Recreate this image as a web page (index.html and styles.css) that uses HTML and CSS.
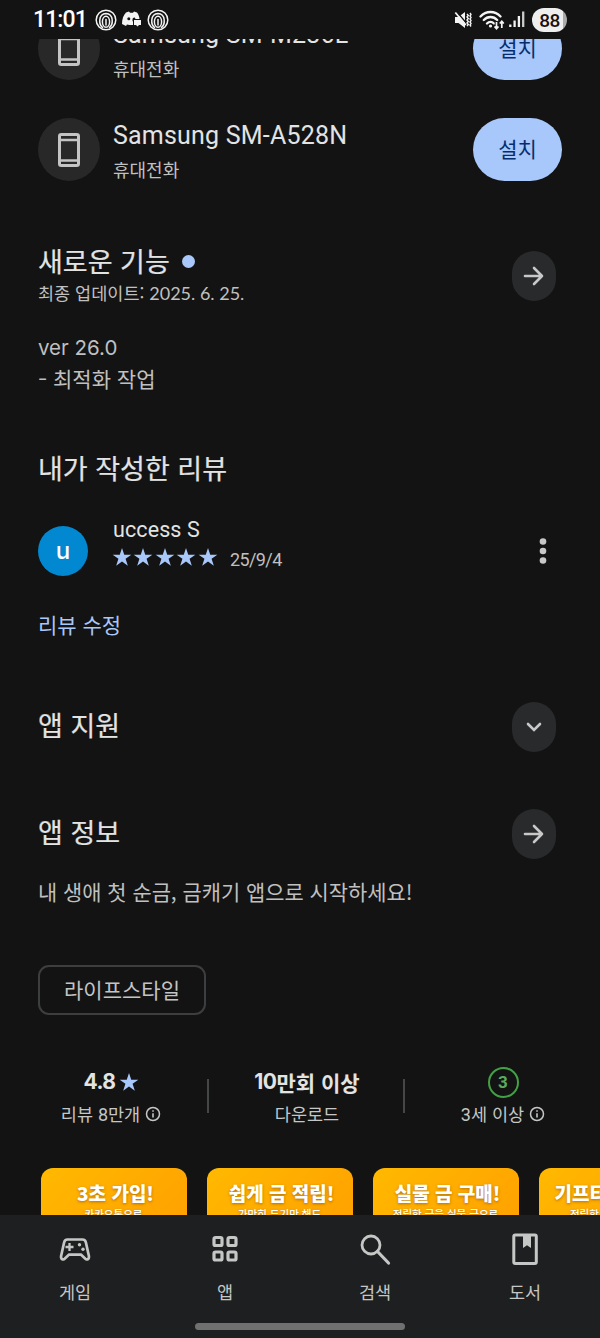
FILE: index.html
```html
<!DOCTYPE html>
<html lang="ko">
<head>
<meta charset="utf-8">
<title>앱 정보</title>
<link rel="stylesheet" href="styles.css">
</head>
<body>
<svg class="defs" width="0" height="0">
  <symbol id="phone" viewBox="0 0 22 34"><rect x="1.5" y="1.5" width="19" height="31" rx="1.8" fill="none" stroke="#c4c4c4" stroke-width="3"/><path d="M1 7h20M1 27.5h20" stroke="#c4c4c4" stroke-width="2.4"/></symbol>
  <symbol id="arrow" viewBox="0 0 22 22"><path d="M2 11h17M11 3l8 8-8 8" fill="none" stroke="#c8c8c8" stroke-width="2.6" stroke-linecap="round" stroke-linejoin="round"/></symbol>
  <symbol id="star" viewBox="0 0 24 24"><path d="M12 1.2l2.7 8h8.5l-6.9 5 2.7 8.2-7-5-7 5 2.7-8.2-6.9-5h8.5z" fill="#a8c7fa"/></symbol>
  <symbol id="info" viewBox="0 0 16 16"><circle cx="8" cy="8" r="6.5" fill="none" stroke="#c4c7c5" stroke-width="1.5"/><path d="M8 7.2v4.2M8 4.3v1.5" stroke="#c4c7c5" stroke-width="1.6"/></symbol>
  <symbol id="touch" viewBox="0 0 22 22"><g fill="none" stroke="#f4f4f4" stroke-width="1.5"><circle cx="11" cy="11" r="9.8"/><path d="M8 18.800C3.500 16 3 5 11 4.500c8 .5 7.500 11.500 3 14.300"/><ellipse cx="11" cy="12.800" rx="3.600" ry="5.500"/><path d="M11 10.500v5.500" stroke-linecap="round"/></g></symbol>
</svg>
<div class="screen">
  <header class="status">
    <span class="clock">11:01</span>
    <svg class="s-touch" width="22" height="22"><use href="#touch"/></svg>
    <svg class="s-chat" width="20" height="17" viewBox="0 0 20 17"><path d="M4 1.500L7 .5l1 1.300h3l1-1.300 3 1c1.600 2 2.300 4.300 2.500 6.500H11v6H7.500L5 13.500 4 15 0 13C0 8 1.500 4 4 1.500z" fill="#f4f4f4"/><circle cx="6.800" cy="7.800" r="1.500" fill="#131313"/><path d="M10.500 10.500V8.500a1.600 1.600 0 0 1 3-1" fill="#131313"/><path d="M12 9h7v5h-2l-1.500 1.500L14 14h-2z" fill="#f4f4f4"/></svg>
    <svg class="s-touch2" width="22" height="22"><use href="#touch"/></svg>
    <svg class="s-mute" width="18" height="18" viewBox="0 0 18 18"><path d="M1 6h3.500L11 1v16l-6.500-5H1z" fill="#f4f4f4"/><path d="M2.500 .5l11 13" stroke="#131313" stroke-width="1.500"/><path d="M1.300 1.500l10.500 12.500" stroke="#f4f4f4" stroke-width="1.800"/><path d="M13 3l1.300 1.500L13 6l1.300 1.500L13 9l1.300 1.500L13 12l1.300 1.500L13 15M16 2l1 1.500L16 5l1 1.500L16 8l1 1.500-1 1.500 1 1.500-1 1.500 1 1.500" fill="none" stroke="#f4f4f4" stroke-width="1.400"/></svg>
    <svg class="s-wifi" width="26" height="20" viewBox="0 0 26 20"><g fill="none" stroke="#f4f4f4" stroke-width="2.300" stroke-linecap="round"><path d="M1.500 6.500c5.500-6 14.500-6 20 0M4.800 10c3.700-4 9.700-4 13.400 0M8 13.500c2-2 5-2 7 0"/></g><circle cx="11.500" cy="16" r="1.600" fill="#f4f4f4"/><path d="M17.500 12v6.500M15 16.300l2.500 2.700 2.500-2.700M23 18v-6.500M20.800 13.700l2.200-2.500 2.300 2.500" fill="none" stroke="#131313" stroke-width="3.500"/><path d="M17.500 12v6.500M15.500 16.500l2 2.200 2-2.200M22.800 18v-6.500M20.800 13.500l2-2.200 2 2.200" fill="none" stroke="#f4f4f4" stroke-width="1.700"/></svg>
    <svg class="s-signal" width="16" height="17" viewBox="0 0 16 17"><path d="M1.300 13.500V16M5.600 9.500V16M9.900 5v11" stroke="#f4f4f4" stroke-width="2.300"/><path d="M14.200 .5V16" stroke="#ccc" stroke-width="2.300"/></svg>
    <span class="battery">88</span>
  </header>

  <main class="page">
    <section class="devices">
      <div class="device">
        <div class="disc"><svg width="22" height="34"><use href="#phone"/></svg></div>
        <div class="device-text"><div class="device-name">Samsung SM-M236L</div><div class="device-kind">휴대전화</div></div>
        <div class="install">설치</div>
      </div>
      <div class="device">
        <div class="disc"><svg width="22" height="34"><use href="#phone"/></svg></div>
        <div class="device-text"><div class="device-name">Samsung SM-A528N</div><div class="device-kind">휴대전화</div></div>
        <div class="install">설치</div>
      </div>
    </section>

    <section class="news row">
      <div class="news-text">
        <h2 class="h news-title">새로운 기능<i class="dot"></i></h2>
        <div class="updated">최종 업데이트: <span class="date">2025. 6. 25.</span></div>
      </div>
      <div class="round"><svg width="22" height="22"><use href="#arrow"/></svg></div>
    </section>
    <div class="changes"><div class="ver">ver 26.0</div><div class="note"><span class="dash">-</span>최적화 작업</div></div>

    <h2 class="h review-title">내가 작성한 리뷰</h2>
    <div class="review">
      <div class="avatar">u</div>
      <div class="review-body">
        <div class="author">uccess S</div>
        <div class="rating">
          <svg width="20" height="20"><use href="#star"/></svg><svg width="20" height="20"><use href="#star"/></svg><svg width="20" height="20"><use href="#star"/></svg><svg width="20" height="20"><use href="#star"/></svg><svg width="20" height="20"><use href="#star"/></svg>
          <span class="when">25/9/4</span>
        </div>
      </div>
      <svg class="more" width="8" height="28" viewBox="0 0 8 28"><g fill="#c8c8c8"><circle cx="4" cy="4.500" r="3.300"/><circle cx="4" cy="14" r="3.300"/><circle cx="4" cy="23.500" r="3.300"/></g></svg>
    </div>
    <div class="edit">리뷰 수정</div>

    <section class="row support"><h2 class="h">앱 지원</h2><div class="round"><svg width="22" height="22" viewBox="0 0 22 22"><path d="M5 8l6 6 6-6" fill="none" stroke="#c8c8c8" stroke-width="2.600" stroke-linecap="round"/></svg></div></section>
    <section class="row about"><h2 class="h">앱 정보</h2><div class="round"><svg width="22" height="22"><use href="#arrow"/></svg></div></section>
    <p class="desc">내 생애 첫 순금, 금캐기 앱으로 시작하세요!</p>
    <div class="chip">라이프스타일</div>

    <section class="stats">
      <div class="stat"><div class="value"><span class="num">4.8</span><svg width="20" height="20"><use href="#star"/></svg></div><div class="label"><span>리뷰 <span class="digit">8</span>만개</span><svg width="16" height="16"><use href="#info"/></svg></div></div>
      <div class="stat"><div class="value"><span class="num">10</span>만회 이상</div><div class="label">다운로드</div></div>
      <div class="stat"><div class="value"><span class="age">3</span></div><div class="label"><span><span class="digit">3</span>세 이상</span><svg width="16" height="16"><use href="#info"/></svg></div></div>
    </section>

    <section class="shots">
      <div class="shot"><b>3초 가입!</b><span>카카오톡으로</span></div>
      <div class="shot"><b>쉽게 금 적립!</b><span>가만히 두기만 해도</span></div>
      <div class="shot"><b>실물 금 구매!</b><span>적립한 금을 실물 금으로</span></div>
      <div class="shot"><b>기프티콘 구매!</b><span>적립한 금으로 쇼핑</span></div>
    </section>
  </main>

  <nav class="nav">
    <div class="tabs">
      <div class="tab"><svg width="34" height="34" viewBox="0 0 34 34"><path d="M9.500 7.500h15c2 0 3 1 3.400 3l3 13.500c.5 3.500-2.200 4.200-3.800 2.600l-4.200-4H11.100l-4.200 4C5.300 28.200 2.600 27.500 3.100 24l3-13.500c.4-2 1.400-3 3.400-3z" fill="none" stroke="#c4c7c5" stroke-width="2.700" stroke-linejoin="round"/><path d="M11.500 11v8M7.500 15h8" stroke="#c4c7c5" stroke-width="2.300"/><circle cx="21.500" cy="12.800" r="1.700" fill="#c4c7c5"/><circle cx="25" cy="17.200" r="1.700" fill="#c4c7c5"/></svg><span>게임</span></div>
      <div class="tab"><svg width="34" height="34" viewBox="0 0 34 34"><g fill="none" stroke="#c4c7c5" stroke-width="3.200"><rect x="6" y="5.500" width="8" height="8" rx="1.600"/><rect x="20" y="5.500" width="8" height="8" rx="1.600"/><rect x="6" y="20" width="8" height="8" rx="1.600"/><rect x="20" y="20" width="8" height="8" rx="1.600"/></g></svg><span>앱</span></div>
      <div class="tab"><svg width="34" height="34" viewBox="0 0 34 34"><circle cx="13" cy="13" r="9" fill="none" stroke="#c4c7c5" stroke-width="2.800"/><path d="M19.500 19.500L30.500 31" stroke="#c4c7c5" stroke-width="3.200" stroke-linecap="round"/></svg><span>검색</span></div>
      <div class="tab"><svg width="34" height="34" viewBox="0 0 34 34"><rect x="5.800" y="3" width="22.500" height="28.500" rx="1.500" fill="none" stroke="#c4c7c5" stroke-width="3"/><path d="M15 3h8v13l-4-2.700-4 2.700z" fill="#c4c7c5"/></svg><span>도서</span></div>
    </div>
    <div class="handle"></div>
  </nav>
</div>
</body>
</html>
```

FILE: styles.css
```css
* { box-sizing: border-box; }
body { margin: 0; background: #131313; color: #e3e3e3; font-family: "Noto Sans CJK KR", sans-serif; }
svg { display: block; flex: none; }
.defs { position: absolute; }
h2, p { margin: 0; }
.screen { width: 600px; height: 1338px; display: flex; flex-direction: column; overflow: hidden; background: #131313; }

.status { height: 39px; flex: none; display: flex; align-items: center; padding: 0 33px; color: #fff; }
.clock { font: 500 23px/38px Roboto, sans-serif; width: 62px; letter-spacing: -.9px; }
.s-chat { margin: 0 5px 0 5px; }
.s-mute { margin-left: auto; }
.s-wifi { margin: 0 4px 0 7px; }
.s-signal { margin-right: 7px; }
.battery { width: 35px; height: 24px; border-radius: 12px; background: linear-gradient(90deg, #eee 88%, #aaa 88%); color: #131313; font: 500 19px/25px Roboto, sans-serif; text-align: center; letter-spacing: -.5px; }

.page { flex: 1; min-height: 0; overflow: hidden; padding: 0 38px; }
.devices { margin-top: -22px; display: flex; flex-direction: column; gap: 38px; }
.device { height: 63px; display: flex; }
.disc { width: 62px; height: 63px; border-radius: 50%; background: #282828; display: grid; place-items: center; }
.device-text { margin-left: 13px; flex: 1; }
.device-name { font: 400 25px/36px Roboto, "Noto Sans CJK KR", sans-serif; letter-spacing: .2px; }
.device-kind { font-size: 18px; line-height: 30px; color: #c0c0c0; }
.install { width: 89px; height: 63px; border-radius: 32px; background: #a8c7fa; color: #062e6f; font-size: 21px; line-height: 61px; text-align: center; }

.row { display: flex; justify-content: space-between; align-items: center; padding-right: 6px; height: 50px; }
.h { font-size: 27px; font-weight: 400; line-height: 36px; color: #e3e3e3; -webkit-text-stroke: .2px; }
.row > .h { margin-bottom: 4px; }
.round { width: 44px; height: 50px; border-radius: 22px; background: #282a2c; display: grid; place-items: center; }
.news { margin-top: 70px; }
.news-text { margin-bottom: 5px; }
.news-title { display: flex; align-items: center; margin-top: 3px; }
.dot { width: 13px; height: 13px; border-radius: 50%; background: #a8c7fa; margin-left: 12px; }
.updated { font-size: 17.500px; line-height: 28px; color: #c0c0c0; }
.date { font-family: Lato, sans-serif; font-size: 18px; }
.changes { margin-top: 30px; font-size: 21px; color: #c0c0c0; }
.ver { font: 400 20.500px/34px Inter, sans-serif; }
.note { line-height: 26px; }
.dash { display: inline-block; width: 15px; transform: scaleX(1.25); transform-origin: left; }
.review-title { margin-top: 59px; }
.review { margin-top: 33px; height: 65px; display: flex; }
.avatar { width: 50px; height: 50px; margin-top: 7px; border-radius: 50%; background: #0288d1; color: #fff; font: 500 24px/49px Inter, sans-serif; text-align: center; }
.review-body { margin-left: 25px; flex: 1; }
.author { font: 400 21.500px/22px Roboto, sans-serif; letter-spacing: .1px; }
.rating { display: flex; align-items: center; gap: 1.400px; margin-left: -1px; height: 32px; }
.when { font: 400 18px/30px Roboto, sans-serif; letter-spacing: -.6px; color: #c0c0c0; margin: 5px 0 0 11px; }
.more { margin: 18px 15px 0 0; }
.edit { margin-top: 24px; font-size: 21px; line-height: 32px; color: #a8c7fa; }
.support { margin-top: 62px; }
.about { margin-top: 57px; }
.desc { margin-top: 16px; font-size: 20.900px; line-height: 32px; color: #c0c0c0; white-space: nowrap; }
.chip { width: 168px; height: 50px; margin-top: 58px; border: 2px solid #3c3e3f; border-radius: 11px; font-size: 21px; line-height: 45px; text-align: center; color: #c4c4c4; }
.stats { display: grid; grid-template-columns: 196px 196px 196px; margin: 49px -26px 0 -27px; }
.stat { display: flex; flex-direction: column; align-items: center; position: relative; padding-left: 4px; }
.stat + .stat::before { content: ""; position: absolute; left: 0; top: 15px; width: 1.500px; height: 34px; background: #444746; }
.value { height: 36px; display: flex; align-items: center; font-weight: 700; font-size: 21px; line-height: 36px; white-space: pre; }
.num { font-family: Inter, sans-serif; letter-spacing: -.5px; }
.value svg { margin-left: 3px; }
.age { width: 31px; height: 31px; border: 2px solid #43a047; border-radius: 50%; color: #5bab5f; font: 700 17px/27px Roboto, sans-serif; text-align: center; }
.label { height: 28px; display: flex; align-items: center; gap: 5px; font-size: 17.500px; line-height: 28px; color: #c4c7c5; }
.digit { font-family: Roboto, sans-serif; font-size: 18px; }
.shots { display: flex; gap: 20px; margin: 40px -38px 0 3px; }
.shot { width: 146px; height: 200px; flex: none; border-radius: 12px; background: linear-gradient(135deg, #ffb900, #ff9800 80%); color: #fff; text-align: center; padding: 11px 0 0 3px; text-shadow: 0 1px 3px #8a5000aa; white-space: nowrap; overflow: hidden; }
.shot b { display: block; font-weight: 900; font-size: 19px; line-height: 28px; }
.shot span { display: block; padding-right: 4px; font-weight: 500; font-size: 10.500px; line-height: 14px; }

.nav { height: 123px; flex: none; background: #1e1f20; }
.tabs { display: grid; grid-template-columns: repeat(4, 1fr); padding-top: 17px; height: 108px; }
.tab { display: flex; flex-direction: column; align-items: center; color: #c4c7c5; font-size: 17.500px; line-height: 28px; gap: 12px; }
.handle { width: 210px; height: 7px; margin: 0 auto; border-radius: 4px; background: #707070; }
```
